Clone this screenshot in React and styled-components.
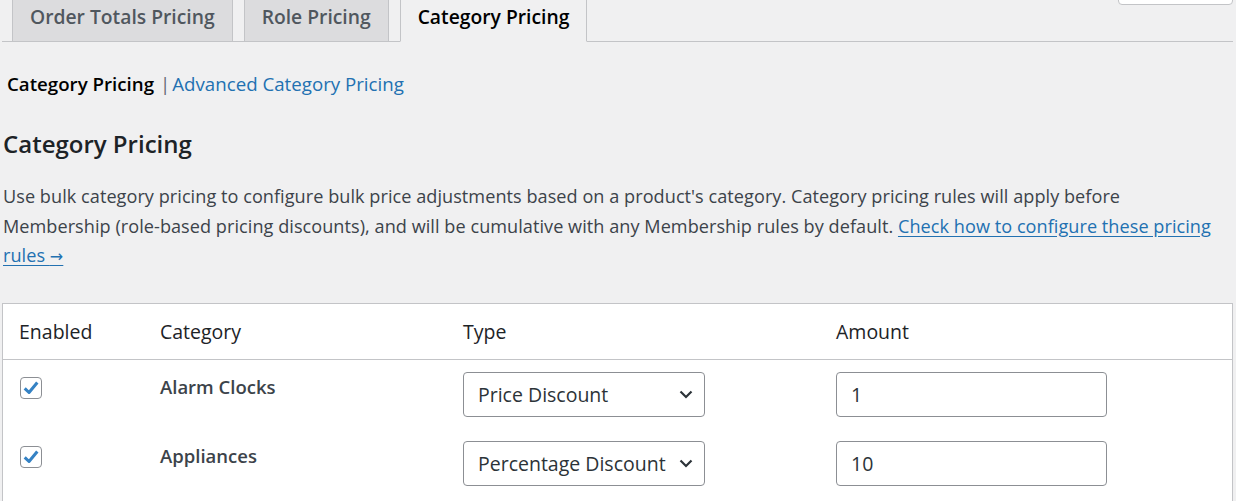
import React from 'react';
import styled, { createGlobalStyle } from 'styled-components';

const Global = createGlobalStyle`
    body {
        margin: 0;
        background: #f0f0f1;
        font-family: "Open Sans", "Noto Sans", sans-serif;
        color: #3c434a;
        overflow: hidden;
    }
`;

const Page = styled.div`
    padding: 0 3px 0 2px;
    font-size: 18px;
`;

const TabBar = styled.div`
    display: flex;
    align-items: flex-end;
    gap: 11px;
    padding-left: 10px;
    margin-top: -8px;
    border-bottom: 1px solid #c3c4c7;
    height: 49px;
`;

const Tab = styled.div`
    box-sizing: border-box;
    height: 49px;
    margin-bottom: -1px;
    padding: 0 17px 3px;
    display: flex;
    align-items: center;
    font-size: 19.3px;
    font-weight: 600;
    border: 1px solid #c3c4c7;
    background: ${p => (p.$active ? '#f0f0f1' : '#dcdcde')};
    border-bottom-color: ${p => (p.$active ? '#f0f0f1' : '#c3c4c7')};
    color: ${p => (p.$active ? '#000' : '#50575e')};
`;

const CornerButton = styled.div`
    margin-left: auto;
    align-self: flex-start;
    width: 113px;
    height: 11px;
    background: #fff;
    border: 1px solid #c3c4c7;
    border-radius: 0 0 4px 4px;
`;

const SubNav = styled.div`
    display: flex;
    align-items: center;
    padding: 28px 0 0 5px;
    height: 26px;
    font-size: 18.7px;
`;

const Current = styled.span`
    color: #000;
    font-weight: 600;
`;

const Sep = styled.span`
    color: #646970;
    margin: 0 2px 0 6px;
`;

const SubLink = styled.a`
    color: #2271b1;
    text-decoration: none;
`;

const Heading = styled.h2`
    margin: 33px 0 0 1px;
    font-size: 24px;
    font-weight: 600;
    color: #1d2327;
    line-height: 30px;
`;

const Intro = styled.p`
    margin: 23px 0 0 1px;
    line-height: 29.5px;
    height: 88.5px;
    font-size: 18.1px;
    letter-spacing: 0.05px;
    white-space: nowrap;
`;

const DocLink = styled.a`
    color: #2271b1;
    text-decoration: underline;
    text-underline-offset: 3px;
`;

const Arrow = styled.span`
    font-family: "DejaVu Sans", sans-serif;
    font-size: 16px;
    line-height: 1;
`;

const Table = styled.div`
    margin-top: 32px;
    padding-bottom: 12px;
    background: #fff;
    border: 1px solid #c3c4c7;
    display: grid;
    grid-template-columns: 141px 303px 373px 1fr;
`;

const HeadCell = styled.div`
    height: 54px;
    display: flex;
    align-items: center;
    padding-left: 16px;
    padding-top: 1px;
    font-size: 19.5px;
    color: #1d2327;
    border-bottom: 1px solid #c3c4c7;
`;

const Cell = styled.div`
    height: 69px;
    display: flex;
    align-items: flex-start;
    padding: ${p => (p.$pad ? p.$pad : '12px 0 0 16px')};
    box-sizing: border-box;
`;

const CategoryName = styled.span`
    font-weight: 600;
    font-size: 18.5px;
    color: #3c434a;
    padding-top: 2px;
`;

const Check = styled.span`
    width: 22px;
    height: 22px;
    flex-shrink: 0;
    box-sizing: border-box;
    border: 1px solid #8c8f94;
    border-radius: 4px;
    background: #fff;
    display: flex;
    align-items: center;
    justify-content: center;
    margin-top: 5px;
`;

const Select = styled.div`
    box-sizing: border-box;
    width: 242px;
    height: 45px;
    border: 1px solid #8c8f94;
    border-radius: 4px;
    background: #fff;
    display: flex;
    align-items: center;
    justify-content: space-between;
    padding: 0 10px 0 14px;
    font-size: 19.5px;
    color: #2c3338;
    white-space: nowrap;
`;

const Input = styled.div`
    box-sizing: border-box;
    width: 271px;
    height: 45px;
    border: 1px solid #8c8f94;
    border-radius: 4px;
    background: #fff;
    display: flex;
    align-items: center;
    padding-left: 14px;
    font-size: 19.5px;
    color: #2c3338;
`;

const rows = [
    { name: 'Alarm Clocks', type: 'Price Discount', amount: '1' },
    { name: 'Appliances', type: 'Percentage Discount', amount: '10' },
];

function Tick() {
    return (
        <svg width="18" height="18" viewBox="0 0 20 20">
            <path d="M3 10.5 L7.8 15 L17 4" fill="none" stroke="#3582c4" strokeWidth="3.4" strokeLinejoin="round" />
        </svg>
    );
}

function Chevron() {
    return (
        <svg width="16" height="16" viewBox="0 0 16 16" style={{ flexShrink: 0 }}>
            <path d="M2.5 5.5 L8 11 L13.5 5.5" fill="none" stroke="#2c3338" strokeWidth="2.2" />
        </svg>
    );
}

export default function App() {
    return (
        <Page>
            <Global />
            <TabBar>
                <Tab>Order Totals Pricing</Tab>
                <Tab>Role Pricing</Tab>
                <Tab $active>Category Pricing</Tab>
                <CornerButton />
            </TabBar>
            <SubNav>
                <Current>Category Pricing</Current>
                <Sep>|</Sep>
                <SubLink href="#">Advanced Category Pricing</SubLink>
            </SubNav>
            <Heading>Category Pricing</Heading>
            <Intro>
                Use bulk category pricing to configure bulk price adjustments based on a product's category. Category pricing rules will apply before
                <br />
                Membership (role-based pricing discounts), and will be cumulative with any Membership rules by default.{' '}
                <DocLink href="#">
                    Check how to configure these pricing
                    <br />
                    rules <Arrow>→</Arrow>
                </DocLink>
            </Intro>
            <Table>
                <HeadCell>Enabled</HeadCell>
                <HeadCell>Category</HeadCell>
                <HeadCell>Type</HeadCell>
                <HeadCell>Amount</HeadCell>
                {rows.map(r => (
                    <React.Fragment key={r.name}>
                        <Cell $pad="12px 0 0 17px">
                            <Check><Tick /></Check>
                        </Cell>
                        <Cell>
                            <CategoryName>{r.name}</CategoryName>
                        </Cell>
                        <Cell>
                            <Select>
                                {r.type}
                                <Chevron />
                            </Select>
                        </Cell>
                        <Cell>
                            <Input>{r.amount}</Input>
                        </Cell>
                    </React.Fragment>
                ))}
            </Table>
        </Page>
    );
}
